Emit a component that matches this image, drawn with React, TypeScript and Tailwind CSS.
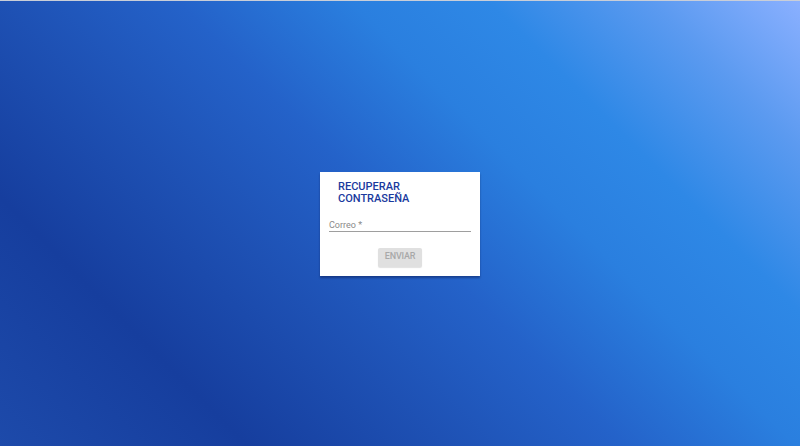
export default function App() {
  return (
    <div
      className="w-[800px] h-[446px] flex items-center justify-center border-t border-[#c9ced8]"
      style={{
        background:
          "linear-gradient(45deg, #1d4aaa 0%, #163e9e 20%, #1e51b4 36%, #2462c9 50%, #2a7fdf 64%, #2e88e6 75%, #5b9af0 88%, #8ab0ff 100%)",
        fontFamily: "Roboto, 'Noto Sans', sans-serif",
      }}
    >
      <div className="w-[160px] h-[104px] bg-white flex flex-col shadow-[0_2px_2px_rgba(0,0,40,0.35)]">
        <div className="pl-[18px] pt-[9px] text-[11px] leading-[12px] font-medium text-[#1a3a9e]">
          <div>RECUPERAR</div>
          <div>CONTRASEÑA</div>
        </div>
        <div className="mx-[9px] mt-[16px]">
          <div className="text-[9px] leading-[9px] text-[#8a8a8a]">Correo *</div>
          <div className="mt-[1px] h-[1px] bg-[#9e9e9e]" />
        </div>
        <div className="flex justify-center mt-[16px]">
          <div className="w-[44px] h-[19px] rounded-[2px] bg-[#e0e0e0] shadow-[0_1px_1px_rgba(0,0,0,0.12)] flex items-center justify-center text-[9px] tracking-[-0.2px] font-medium text-[#a8a8a8]">
            ENVIAR
          </div>
        </div>
      </div>
    </div>
  );
}
